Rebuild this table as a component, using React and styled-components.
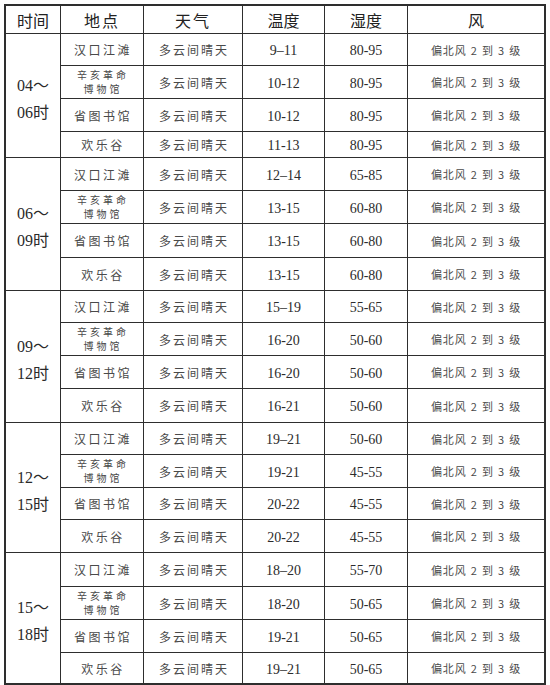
import React from "react";
import styled, { createGlobalStyle } from "styled-components";

const GlobalStyle = createGlobalStyle`
  html, body {
    margin: 0;
    padding: 0;
    background: #ffffff;
  }
  body {
    font-family: "Liberation Serif", "Noto Sans CJK SC", serif;
  }
`;

const Page = styled.div`
  padding: 4px 0 0 4px;
`;

// grid lines come from the dark background showing through the 1px gaps
const Grid = styled.div`
  display: grid;
  width: 538px;
  grid-template-columns: 54px 82px 98px 81px 82px 136px;
  grid-template-rows: ${({ $rows }) => $rows.map((h) => `${h}px`).join(" ")};
  gap: 1px;
  background: #2e2e2e;
  padding: 1px;
  border: 1px solid #2e2e2e;
`;

const Cell = styled.div`
  background: #ffffff;
  display: flex;
  align-items: center;
  justify-content: center;
  text-align: center;
  color: #3c3c3c;
  grid-row: ${({ $span }) => ($span ? `span ${$span}` : "auto")};
`;

const HeadCell = styled(Cell)`
  font-family: "Noto Sans CJK SC", sans-serif;
  font-size: 16px;
  color: #222222;
  letter-spacing: ${({ $wide }) => ($wide ? "2px" : "0")};
`;

const TimeCell = styled(Cell)`
  flex-direction: column;
  font-size: 16px;
  line-height: 27px;
  color: #2a2a2a;
  padding-top: 6px;
`;

const PlaceCell = styled(Cell)`
  flex-direction: column;
  font-family: "Noto Sans CJK SC", sans-serif;
  font-size: ${({ $small }) => ($small ? "10px" : "12px")};
  letter-spacing: ${({ $small }) => ($small ? "3px" : "2.5px")};
  line-height: ${({ $small }) => ($small ? "14.5px" : "normal")};
  color: #4a4a4a;
  padding-left: 2px;
`;

const WeatherCell = styled(Cell)`
  font-family: "Noto Sans CJK SC", sans-serif;
  font-size: 12px;
  letter-spacing: 2px;
  color: #4a4a4a;
  padding-left: 2px;
`;

const NumCell = styled(Cell)`
  font-family: "Liberation Serif", serif;
  font-size: 14px;
  color: #2c2c2c;
  padding-top: 3px;
`;

const WindCell = styled(Cell)`
  font-family: "Noto Sans CJK SC", sans-serif;
  font-size: 11px;
  letter-spacing: 0.8px;
  color: #4a4a4a;
  word-spacing: 1px;
`;

const rowHeights = [
  27,
  31, 32, 32, 25,
  32, 32, 33, 32,
  31, 32, 32, 33,
  31, 32, 31, 32,
  33, 32, 32, 30,
];

const places = ["汉口江滩", "辛亥革命\n博物馆", "省图书馆", "欢乐谷"];

const groups = [
  { from: "04", to: "06", temps: ["9–11", "10-12", "10-12", "11-13"], hum: ["80-95", "80-95", "80-95", "80-95"] },
  { from: "06", to: "09", temps: ["12–14", "13-15", "13-15", "13-15"], hum: ["65-85", "60-80", "60-80", "60-80"] },
  { from: "09", to: "12", temps: ["15–19", "16-20", "16-20", "16-21"], hum: ["55-65", "50-60", "50-60", "50-60"] },
  { from: "12", to: "15", temps: ["19–21", "19-21", "20-22", "20-22"], hum: ["50-60", "45-55", "45-55", "45-55"] },
  { from: "15", to: "18", temps: ["18–20", "18-20", "19-21", "19–21"], hum: ["55-70", "50-65", "50-65", "50-65"] },
];

const App = () => (
  <>
    <GlobalStyle />
    <Page>
      <Grid $rows={rowHeights}>
        <HeadCell>时间</HeadCell>
        <HeadCell $wide>地点</HeadCell>
        <HeadCell $wide>天气</HeadCell>
        <HeadCell>温度</HeadCell>
        <HeadCell>湿度</HeadCell>
        <HeadCell>风</HeadCell>
        {groups.map((g) =>
          places.map((place, i) => {
            const lines = place.split("\n");
            return (
              <React.Fragment key={`${g.from}-${i}`}>
                {i === 0 && (
                  <TimeCell $span={4}>
                    <span>{g.from}～</span>
                    <span>{g.to}时</span>
                  </TimeCell>
                )}
                <PlaceCell $small={lines.length > 1}>
                  {lines.map((line, j) => (
                    <span key={j}>{line}</span>
                  ))}
                </PlaceCell>
                <WeatherCell>多云间晴天</WeatherCell>
                <NumCell>{g.temps[i]}</NumCell>
                <NumCell>{g.hum[i]}</NumCell>
                <WindCell>偏北风 2 到 3 级</WindCell>
              </React.Fragment>
            );
          })
        )}
      </Grid>
    </Page>
  </>
);

export default App;
